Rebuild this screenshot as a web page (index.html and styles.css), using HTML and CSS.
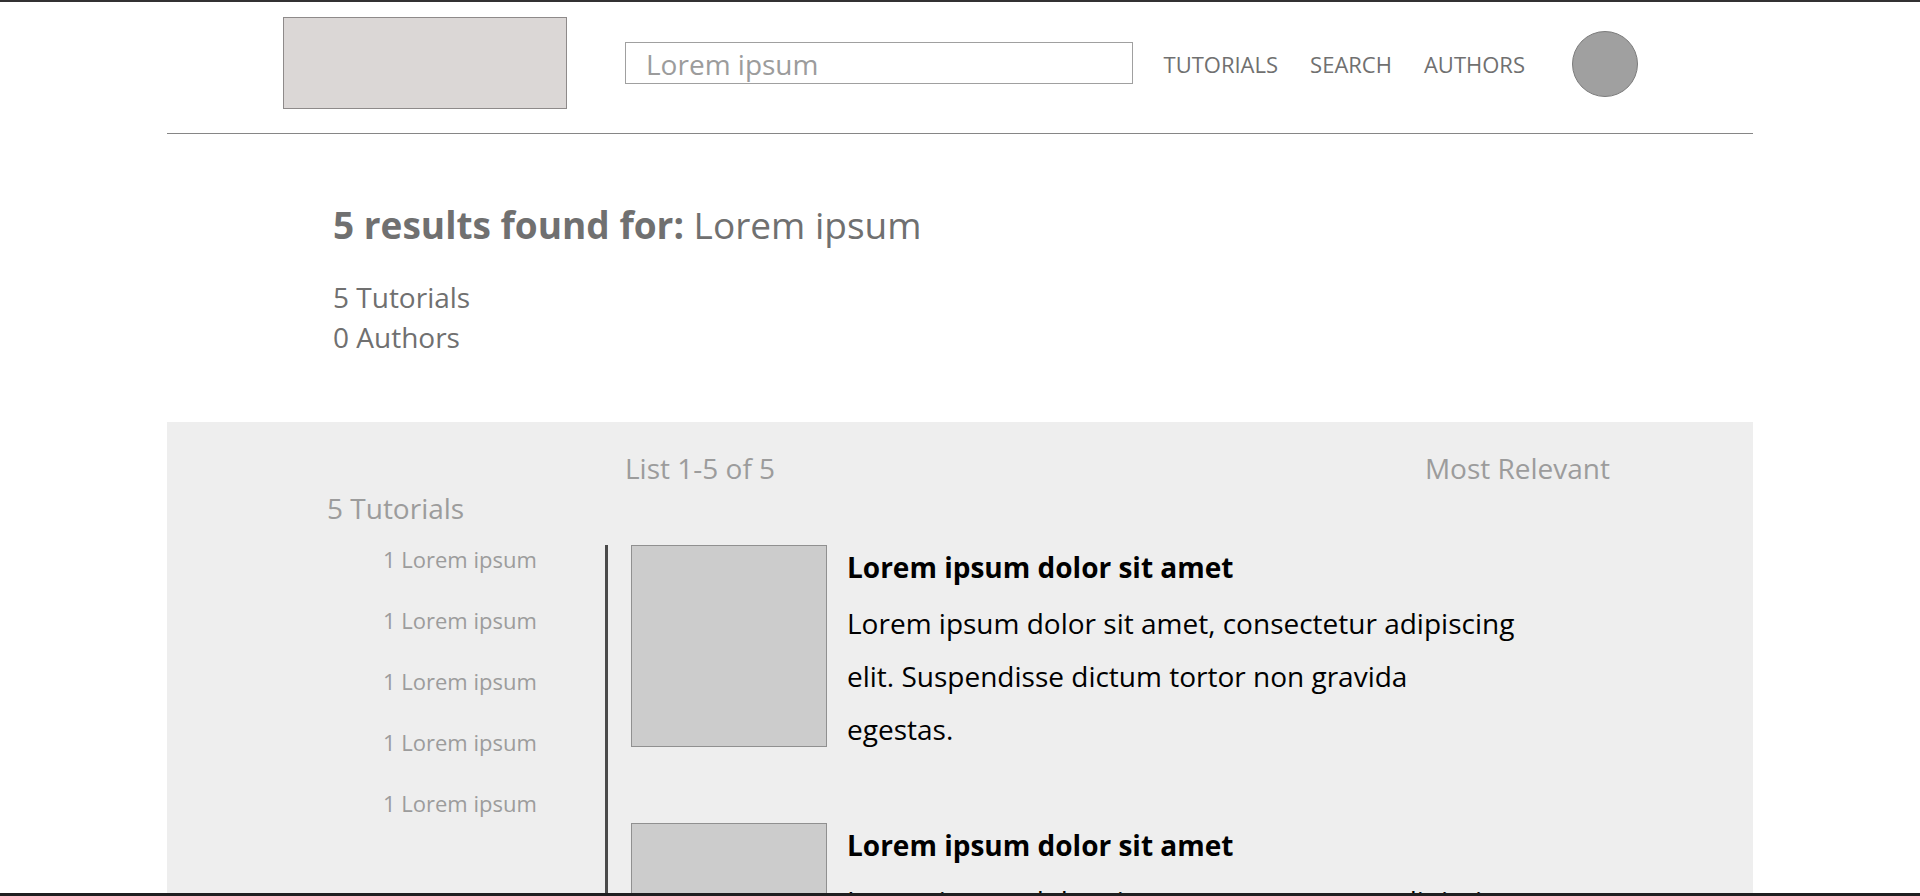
FILE: index.html
```
<!DOCTYPE html>
<html lang="en">
<head>
<meta charset="utf-8">
<title>Lorem ipsum</title>
<link rel="stylesheet" href="styles.css">
</head>
<body>
<div class="page">
  <header class="header">
    <a class="logo" href="#" aria-label="Home"></a>
    <input class="search" type="text" value="Lorem ipsum" aria-label="Search">
    <nav class="nav">
      <a href="#">TUTORIALS</a>
      <a href="#">SEARCH</a>
      <a href="#">AUTHORS</a>
    </nav>
    <button class="avatar" type="button" aria-label="Account"></button>
  </header>
  <section class="summary">
    <h1 class="summary-title"><strong>5 results found for:</strong> Lorem ipsum</h1>
    <p>5 Tutorials</p>
    <p>0 Authors</p>
  </section>
  <main class="panel">
    <div class="toolbar">
      <span>List 1-5 of 5</span>
      <button class="sort" type="button">Most Relevant</button>
    </div>
    <h2 class="side-title">5 Tutorials</h2>
    <div class="columns">
      <ul class="side-list">
        <li><a href="#">1 Lorem ipsum</a></li>
        <li><a href="#">1 Lorem ipsum</a></li>
        <li><a href="#">1 Lorem ipsum</a></li>
        <li><a href="#">1 Lorem ipsum</a></li>
        <li><a href="#">1 Lorem ipsum</a></li>
      </ul>
      <div class="results">
        <article class="result">
          <div class="thumb"></div>
          <div class="result-text">
            <h3>Lorem ipsum dolor sit amet</h3>
            <p>Lorem ipsum dolor sit amet, consectetur adipiscing elit. Suspendisse dictum tortor non gravida egestas.</p>
          </div>
        </article>
        <article class="result">
          <div class="thumb"></div>
          <div class="result-text">
            <h3>Lorem ipsum dolor sit amet</h3>
            <p>Lorem ipsum dolor sit amet, consectetur adipiscing elit. Suspendisse dictum tortor non gravida egestas.</p>
          </div>
        </article>
      </div>
    </div>
  </main>
</div>
</body>
</html>
```
FILE: styles.css
```
* {
  box-sizing: border-box;
  margin: 0;
  padding: 0;
}

body {
  height: 100vh;
  overflow: hidden;
  border-top: 2px solid #333132;
  border-bottom: 3px solid #1f1e20;
  background: #fff;
  color: #707070;
  font: 28px/40px "Open Sans", "Noto Sans", sans-serif;
}

a {
  color: inherit;
  text-decoration: none;
}

button,
input {
  font: inherit;
  color: inherit;
}

.page {
  margin: 0 167px;
}

.header {
  display: flex;
  align-items: center;
  padding: 15px 115px 24px 116px;
  border-bottom: 1px solid #868686;
}

.logo {
  width: 284px;
  height: 92px;
  border: 1px solid #8e8a8a;
  background: #dbd7d6;
}

.search {
  flex: 1;
  min-width: 0;
  height: 42px;
  margin-left: 58px;
  padding: 2px 20px 0;
  border: 1px solid #a0a0a0;
  background: #fff;
  color: #9c9c9c;
}

.nav {
  display: flex;
  gap: 32px;
  margin: 2px 47px 0 31px;
  font-size: 22px;
  line-height: 32px;
}

.avatar {
  width: 66px;
  height: 66px;
  margin-top: 2px;
  border: 1px solid #7c7c7c;
  border-radius: 50%;
  background: #a0a0a0;
}

.summary {
  padding: 64px 166px 65px;
}

.summary-title {
  margin-bottom: 25px;
  font-size: 37px;
  line-height: 54px;
  font-weight: 400;
}

.panel {
  padding-top: 26px;
  background: #eee;
  color: #9c9c9c;
}

.toolbar {
  display: flex;
  justify-content: space-between;
  padding: 0 143px 0 458px;
}

.sort {
  border: 0;
  background: none;
}

.side-title {
  margin-bottom: 17px;
  padding-left: 160px;
  font-size: inherit;
  font-weight: 400;
}

.columns {
  display: flex;
}

.side-list {
  display: flex;
  flex-direction: column;
  gap: 33px;
  width: 438px;
  padding-left: 216px;
  list-style: none;
  font-size: 22px;
  line-height: 28px;
}

.results {
  display: flex;
  flex: 1;
  flex-direction: column;
  gap: 67px;
  padding: 0 0 67px 23px;
  border-left: 3px solid #4a4a4a;
  color: #000;
}

.result {
  display: flex;
  gap: 20px;
}

.thumb {
  flex: none;
  width: 196px;
  height: 202px;
  border: 1px solid #909090;
  background: #ccc;
}

.result-text {
  max-width: 672px;
  padding-top: 2px;
}

.result-text h3 {
  margin-bottom: 10px;
  font-size: inherit;
  font-weight: 700;
}

.result-text p {
  line-height: 53px;
}
```
